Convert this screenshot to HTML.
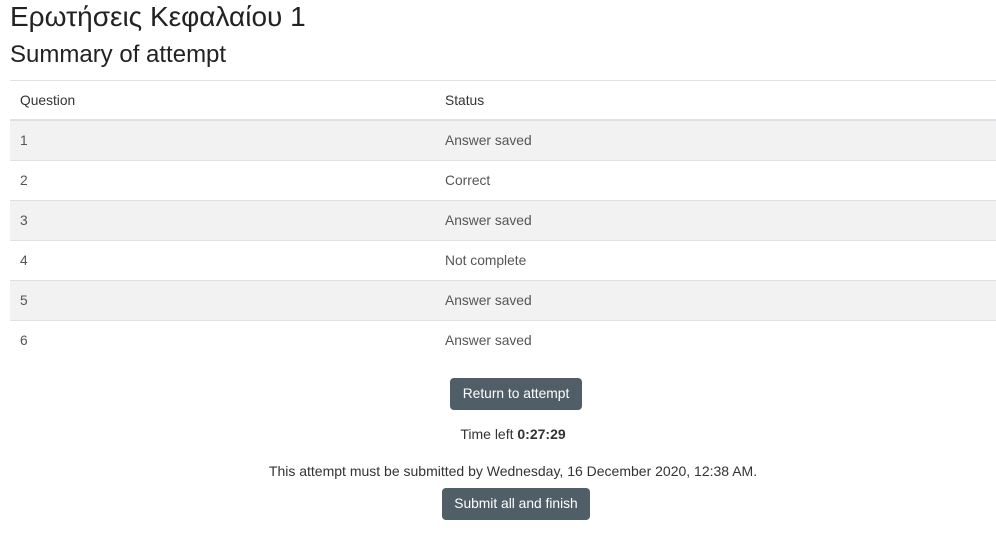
<!DOCTYPE html>
<html><head><meta charset="utf-8"><style>
body{margin:0;background:#fff;font-family:"Liberation Sans","DejaVu Sans",sans-serif;color:#333;width:996px;height:546px;overflow:hidden;position:relative}
h1{position:absolute;left:10px;top:1px;margin:0;font-weight:400;font-size:28px;color:#222}
h2{position:absolute;left:10px;top:41px;margin:0;font-weight:400;font-size:24px;color:#222}
table{position:absolute;left:10px;top:80px;width:986px;border-collapse:collapse;font-size:13.8px;table-layout:fixed}
td,th{height:39px;border-top:1px solid #dee2e6;padding:0 0 0 10px;text-align:left;font-weight:400;color:#555}
th{color:#333;border-bottom:2px solid #dee2e6;height:38px}
col.q{width:425px}
tr.g td{background:#f2f2f2}
.btn{position:absolute;background:#4f5e67;color:#fff;font-size:13.8px;border-radius:4px;text-align:center;line-height:32px;height:32px}
.c{position:absolute;left:0;width:1026px;text-align:center;font-size:14px;color:#333}
</style></head><body>
<h1>Ερωτήσεις Κεφαλαίου 1</h1>
<h2>Summary of attempt</h2>
<table>
<colgroup><col class="q"><col></colgroup>
<tr><th>Question</th><th>Status</th></tr>
<tr class="g"><td>1</td><td>Answer saved</td></tr>
<tr><td>2</td><td>Correct</td></tr>
<tr class="g"><td>3</td><td>Answer saved</td></tr>
<tr><td>4</td><td>Not complete</td></tr>
<tr class="g"><td>5</td><td>Answer saved</td></tr>
<tr><td>6</td><td>Answer saved</td></tr>
</table>
<div class="btn" style="left:450px;top:378px;width:132px">Return to attempt</div>
<div class="c" style="top:426px">Time left <b>0:27:29</b></div>
<div class="c" style="top:463px">This attempt must be submitted by Wednesday, 16 December 2020, 12:38 AM.</div>
<div class="btn" style="left:442px;top:488px;width:148px">Submit all and finish</div>
</body></html>
